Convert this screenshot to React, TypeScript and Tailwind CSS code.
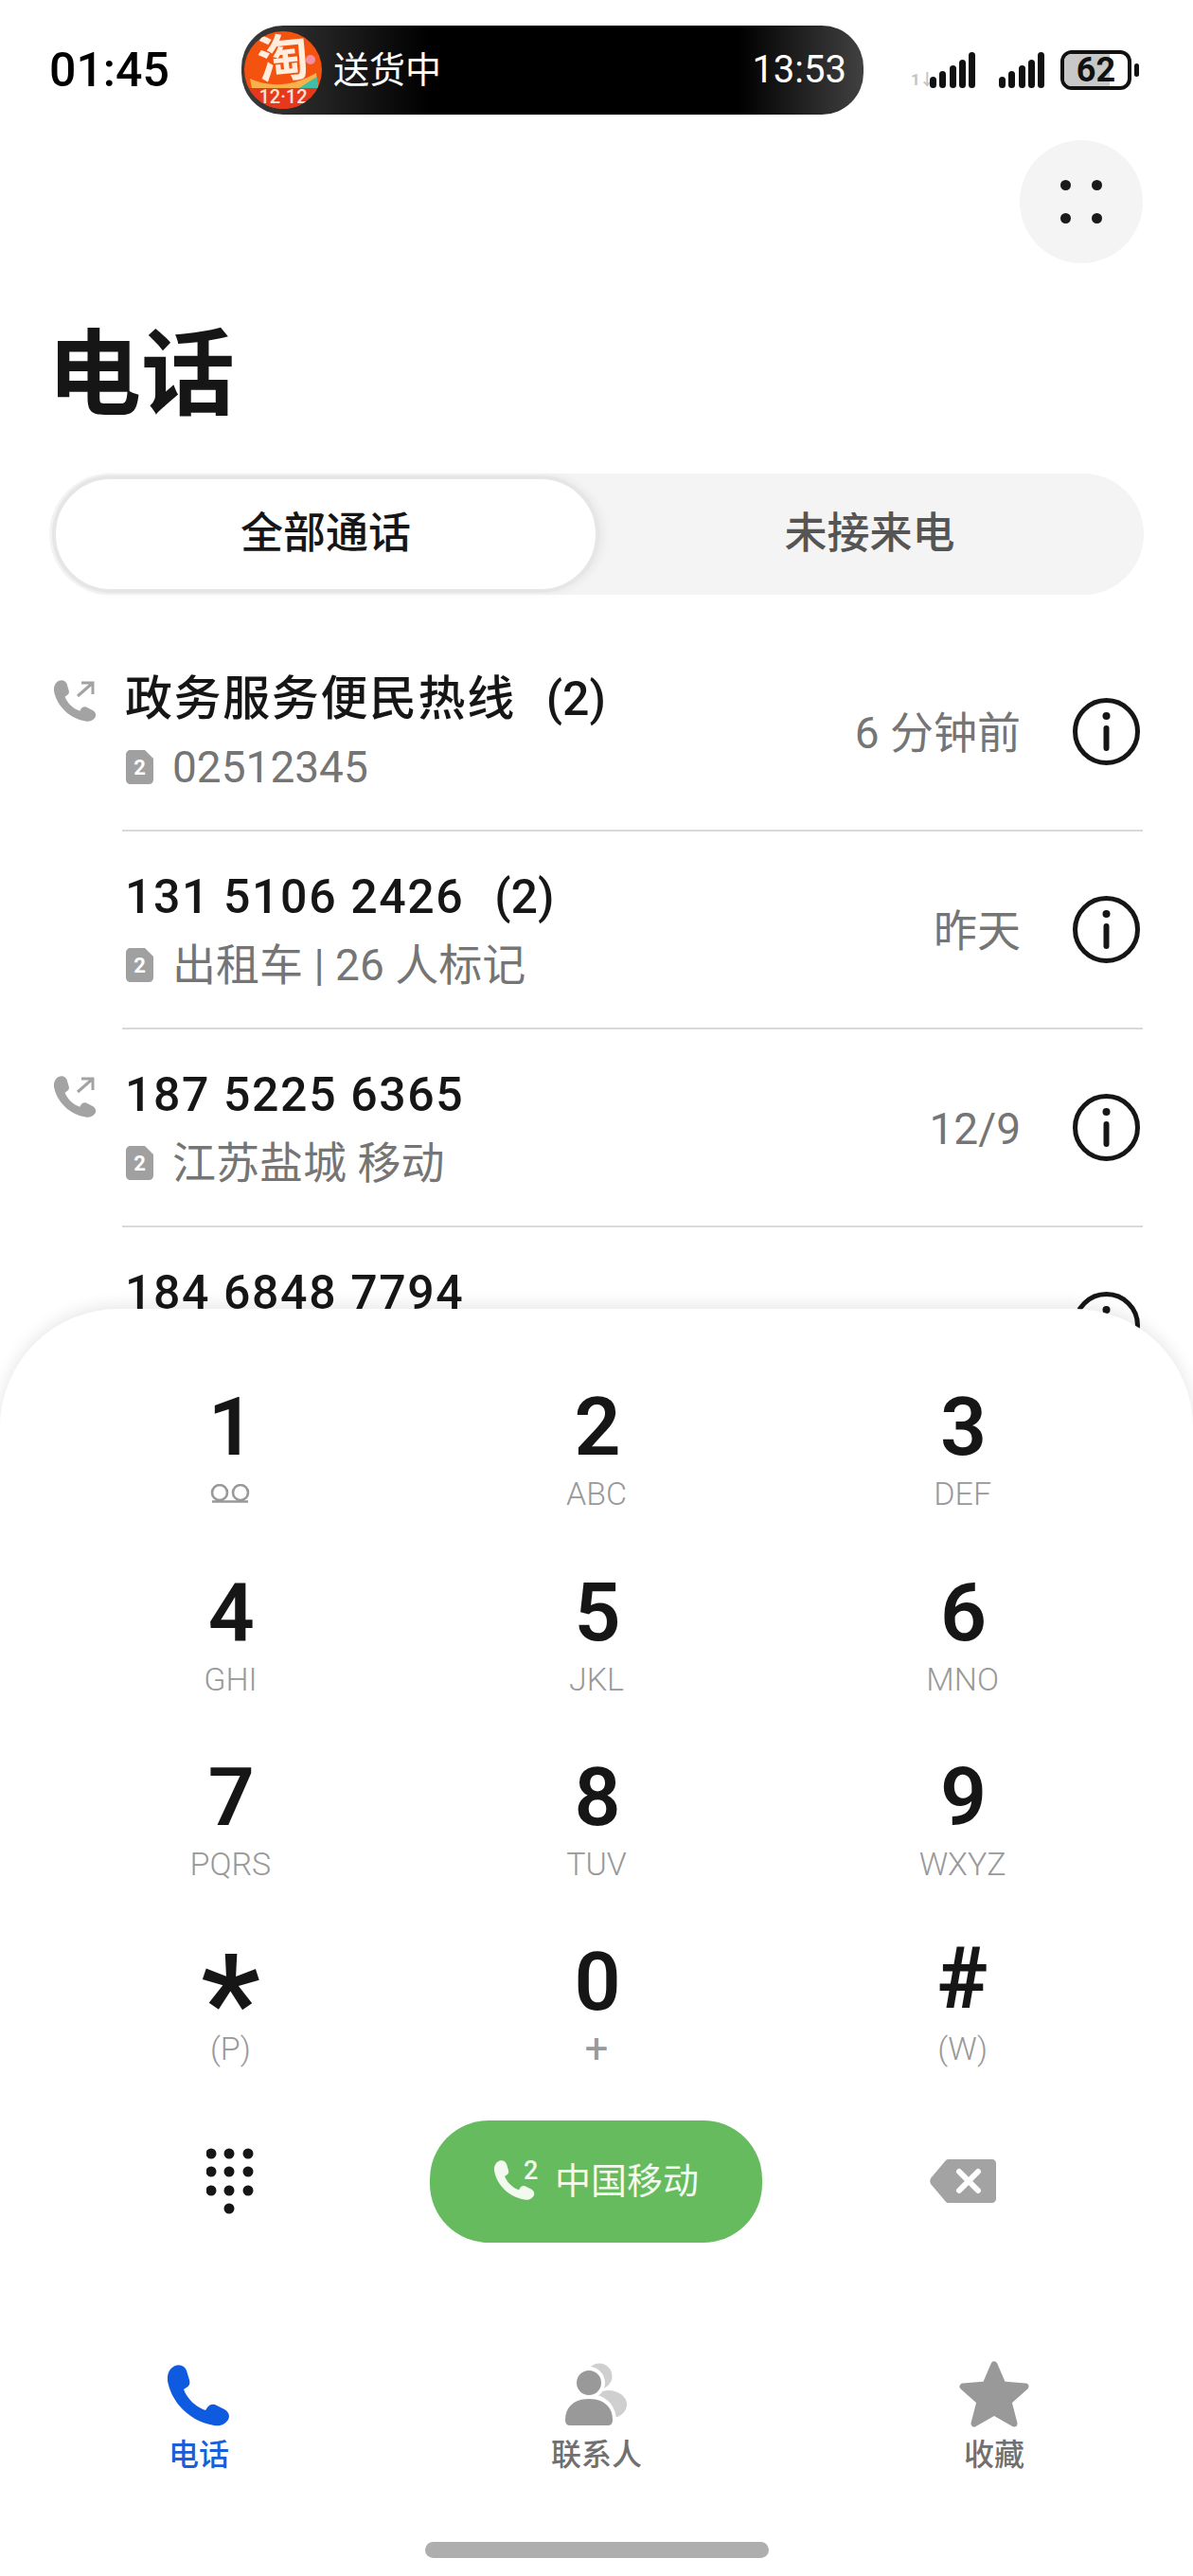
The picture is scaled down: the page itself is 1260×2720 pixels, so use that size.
import React from 'react';

const HANDSET = 'M8 1C13-1 18 1 20 6L23 16C24 20 23 22 20 24L17 26C21 36 29 44 40 48L42 45C44 42 47 41 50 42L60 47C65 50 66 54 64 58C60 64 54 65 49 64C24 60 4 40 0 17C-1 9 3 3 8 1Z';

const calls = [
  { name: '政务服务便民热线', count: '(2)', sub: '02512345', time: '6 分钟前', outgoing: true },
  { name: '131 5106 2426', count: '(2)', sub: '出租车 | 26 人标记', time: '昨天', outgoing: false },
  { name: '187 5225 6365', count: '', sub: '江苏盐城 移动', time: '12/9', outgoing: true },
  { name: '184 6848 7794', count: '', sub: '', time: '', outgoing: false },
];

const keys = [
  { d: '1', l: '' },
  { d: '2', l: 'ABC' },
  { d: '3', l: 'DEF' },
  { d: '4', l: 'GHI' },
  { d: '5', l: 'JKL' },
  { d: '6', l: 'MNO' },
  { d: '7', l: 'PQRS' },
  { d: '8', l: 'TUV' },
  { d: '9', l: 'WXYZ' },
  { d: '*', l: '(P)' },
  { d: '0', l: '+' },
  { d: '#', l: '(W)' },
];

const SignalBars = () => (
  <svg width="48" height="38" viewBox="0 0 48 38" fill="#111">
    <rect x="0" y="26" width="7" height="12" rx="3.5" />
    <rect x="10" y="20" width="7" height="18" rx="3.5" />
    <rect x="21" y="14" width="7" height="24" rx="3.5" />
    <rect x="31" y="8" width="7" height="30" rx="3.5" />
    <rect x="41" y="0" width="7" height="38" rx="3.5" />
  </svg>
);

const InfoIcon = () => (
  <svg width="71" height="71" viewBox="0 0 71 71" fill="none">
    <circle cx="35.5" cy="35.5" r="33" stroke="#161616" strokeWidth="5" />
    <circle cx="35.5" cy="19" r="4" fill="#161616" />
    <rect x="32.5" y="29" width="6" height="27" rx="3" fill="#161616" />
  </svg>
);

const OutgoingIcon = () => (
  <svg width="44" height="45" viewBox="0 0 44 45" fill="none">
    <g transform="scale(0.68)">
      <path d={HANDSET} fill="#a3a3a3" />
    </g>
    <path d="M25 17L41 3M29 3H41V15" stroke="#a3a3a3" strokeWidth="3" />
  </svg>
);

const SimBadge = () => (
  <svg width="29" height="36" viewBox="0 0 29 36" className="shrink-0 ml-[1px]">
    <path d="M5 0H20L29 9V31C29 34 27 36 24 36H5C2 36 0 34 0 31V5C0 2 2 0 5 0Z" fill="#a0a0a0" />
    <text x="14.5" y="26" textAnchor="middle" fontSize="22" fontWeight="700" fontFamily="Roboto, sans-serif" fill="#fff">2</text>
  </svg>
);

const VoicemailIcon = () => (
  <svg width="44" height="20" viewBox="0 0 44 20" fill="none" stroke="#999" strokeWidth="2.6">
    <circle cx="11" cy="9" r="8" />
    <circle cx="33" cy="9" r="8" />
    <path d="M3 18.5H41" />
  </svg>
);

const DialpadIcon = () => (
  <svg width="50" height="70" viewBox="0 0 50 70" fill="#161616">
    {[6, 25, 45].map(y => [5, 24, 44].map(x => <circle key={`${x}-${y}`} cx={x} cy={y} r="5.5" />))}
    <circle cx="24" cy="64" r="5.5" />
  </svg>
);

const BackspaceIcon = () => (
  <svg width="70" height="46" viewBox="0 0 70 46">
    <path d="M17 1C18 0 19 0 20 0H66C68 0 70 2 70 4V42C70 44 68 46 66 46H20C19 46 18 46 17 45L1 26C0 24 0 22 1 20Z" fill="#a3a3a3" />
    <path d="M31 13L51 33M51 13L31 33" stroke="#fff" strokeWidth="6" strokeLinecap="round" />
  </svg>
);

const ContactsIcon = () => (
  <svg width="66" height="68" viewBox="0 0 66 68">
    <circle cx="36" cy="14" r="13.5" fill="#cfcfcf" />
    <ellipse cx="46" cy="44" rx="19" ry="15" fill="#cfcfcf" />
    <circle cx="25" cy="21" r="17" fill="#fff" />
    <path d="M-4 62C-4 44 8 33 25 33C42 33 54 44 54 62V68H-4Z" fill="#fff" />
    <circle cx="25" cy="21" r="13" fill="#999" />
    <path d="M0 60C0 46 10 38 25 38C40 38 50 46 50 60Q50 66 45 66H5Q0 66 0 60Z" fill="#999" />
  </svg>
);

const StarIcon = () => (
  <svg width="74" height="70" viewBox="0 0 74 70">
    <path d="M37 4L46 25L70 27L52 43L58 66L37 54L16 66L22 43L4 27L28 25Z" fill="#999" stroke="#999" strokeWidth="7" strokeLinejoin="round" />
  </svg>
);

const App: React.FC = () => {
  return (
    <div className="w-[1260px] h-[2720px] bg-white flex flex-col overflow-hidden font-['Roboto','Noto_Sans_CJK_SC',sans-serif] text-[#161616]">
      {/* content behind the dial sheet */}
      <div className="h-[1512px] overflow-hidden shrink-0 flex flex-col">
        <div className="flex items-center pt-[27px] pl-[52px] h-[121px] shrink-0">
          <span className="w-[203px] text-[50px] leading-[94px] font-medium text-black">01:45</span>
          <div className="w-[657px] h-[94px] rounded-[44px] bg-[linear-gradient(90deg,#3c3c3c_0%,#000_30%,#000_80%,#414141_100%)] flex items-center pl-[3px] pr-[18px] text-white">
            <div className="relative w-[82px] h-[82px] rounded-full bg-[#f4520f] overflow-hidden flex justify-center shrink-0">
              <svg width="82" height="82" viewBox="0 0 82 82" className="absolute left-0 top-0">
                <path d="M6 50C28 60 52 58 76 44L78 60H8Z" fill="#f9b24b" />
                <path d="M58 60C64 56 70 52 77 48L78 60Z" fill="#3fbfa5" />
                <circle cx="70" cy="30" r="5" fill="#f58fa0" />
                <rect x="0" y="60" width="82" height="24" fill="#e5381c" />
              </svg>
              <span className="relative mt-[2px] h-[56px] text-[54px] leading-[56px] font-bold text-[#ffeede] -rotate-6">淘</span>
              <span className="absolute left-0 right-0 bottom-[2px] text-center text-[20px] leading-[22px] font-medium text-[#ffe3d2]">12·12</span>
            </div>
            <span className="ml-[12px] text-[38px] leading-[46px]">送货中</span>
            <span className="ml-auto text-[40px] leading-[46px]">13:53</span>
          </div>
          <div className="ml-[50px] flex items-end h-[38px]">
            <span className="w-[20px] text-[17px] leading-[18px] font-bold tracking-[-1px] text-[#c4c4c4]">1↓</span>
            <SignalBars />
            <span className="w-[25px]" />
            <SignalBars />
          </div>
          <div className="ml-[17px] flex items-center">
            <div className="relative w-[75px] h-[42px] rounded-[12px] border-[4px] border-[#111] overflow-hidden flex items-center justify-center">
              <div className="absolute left-0 top-0 bottom-0 w-[48px] bg-[#c8c8c8]" />
              <span className="relative text-[36px] leading-[34px] font-bold text-[#111]">62</span>
            </div>
            <div className="ml-[3px] w-[5px] h-[14px] rounded-full bg-[#111]" />
          </div>
        </div>

        <div className="mt-[27px] mr-[53px] self-end w-[130px] h-[130px] rounded-full bg-[#f4f4f4] grid grid-cols-2 place-content-center justify-items-center gap-x-[17px] gap-y-[24px] px-[40px]">
          <span className="w-[11px] h-[11px] rounded-full bg-[#1a1a1a]" />
          <span className="w-[11px] h-[11px] rounded-full bg-[#1a1a1a]" />
          <span className="w-[11px] h-[11px] rounded-full bg-[#1a1a1a]" />
          <span className="w-[11px] h-[11px] rounded-full bg-[#1a1a1a]" />
        </div>

        <h1 className="mt-[63px] ml-[50px] text-[99px] leading-[110px] font-bold">电话</h1>

        <div className="mt-[49px] mx-[52px] h-[128px] shrink-0 rounded-full bg-[#f4f4f4] flex items-center">
          <div className="ml-[3px] w-[578px] h-[124px] rounded-full bg-white border-[4px] border-[#e6e6e6] shadow-[4px_0_10px_rgba(0,0,0,0.05)] flex items-center justify-center text-[45px] font-medium">全部通话</div>
          <div className="flex-1 text-center text-[45px] font-medium text-[#555] pr-[4px]">未接来电</div>
        </div>

        <div className="mt-[41px] ml-[52px] mr-[53px]">
          {calls.map(call => (
            <div key={call.name} className="flex h-[209px]">
              <div className="w-[77px] shrink-0 pt-[49px] pl-[5px]">{call.outgoing && <OutgoingIcon />}</div>
              <div className="flex-1 flex items-center border-b-2 border-[#d9d9d9]">
                <div className="flex-1 pl-[3px]">
                  <div className="text-[50px] leading-[68px] font-medium tracking-[1.6px]">
                    {call.name}
                    {call.count && <span className="ml-[32px] tracking-normal">{call.count}</span>}
                  </div>
                  <div className="mt-[6px] h-[64px] flex items-center gap-[20px] text-[46px] leading-[64px] text-[#757575]">
                    {call.sub && <SimBadge />}
                    <span>{call.sub}</span>
                  </div>
                </div>
                <span className="pt-[4px] text-[46px] text-[#757575] mr-[55px]">{call.time}</span>
                <div className="mr-[3px]"><InfoIcon /></div>
              </div>
            </div>
          ))}
        </div>
      </div>

      {/* dial sheet */}
      <div className="relative -mt-[130px] flex-1 bg-white rounded-t-[125px] shadow-[0_-3px_18px_rgba(0,0,0,0.1)] flex flex-col">
        <div className="mt-[50px] px-[50px] grid grid-cols-3 auto-rows-[195.4px]">
          {keys.map(key => (
            <div key={key.d} className="flex flex-col items-center justify-center">
              {key.d === '*' ? (
                <span className="h-[90px] text-[140px] leading-[132px] font-semibold">*</span>
              ) : key.d === '#' ? (
                <span className="h-[90px] text-[90px] leading-[84px] font-bold">#</span>
              ) : (
                <span className="h-[90px] pl-[2px] text-[86px] leading-[90px] font-semibold">{key.d}</span>
              )}
              <div className="mt-[5px] h-[40px] flex items-center leading-[40px] font-light text-[#999]">
                {key.d === '1' ? (
                  <VoicemailIcon />
                ) : key.d === '0' ? (
                  <span className="text-[44px] font-normal">+</span>
                ) : (
                  <span className="text-[34px]">{key.l}</span>
                )}
              </div>
            </div>
          ))}
        </div>

        <div className="mt-[25px] px-[50px] grid grid-cols-3 items-center">
          <div className="flex justify-center"><DialpadIcon /></div>
          <div className="flex justify-center">
            <div className="w-[351px] h-[129px] rounded-[62px] bg-[#66bb5f] flex items-center justify-center gap-[14px] text-[#f2faf0] text-[38px]">
              <svg width="50" height="44" viewBox="0 0 50 44">
                <g transform="scale(0.65)"><path d={HANDSET} fill="#f2faf0" /></g>
                <text x="31" y="20" fontSize="27" fontWeight="500" fontFamily="Roboto, sans-serif" fill="#f2faf0">2</text>
              </svg>
              <span>中国移动</span>
            </div>
          </div>
          <div className="flex justify-center"><BackspaceIcon /></div>
        </div>

        <div className="mt-[125px] grid grid-cols-3">
          <div className="flex flex-col items-center text-[#1a5fd8]">
            <div className="h-[70px] flex items-end">
              <svg width="66" height="66" viewBox="0 0 66 66"><path d={HANDSET} fill="#0f5be0" /></svg>
            </div>
            <span className="mt-[9px] text-[32px] leading-[40px] font-medium">电话</span>
          </div>
          <div className="flex flex-col items-center text-[#707070]">
            <div className="h-[70px] flex items-end"><ContactsIcon /></div>
            <span className="mt-[9px] text-[32px] leading-[40px] font-medium">联系人</span>
          </div>
          <div className="flex flex-col items-center text-[#707070]">
            <div className="h-[70px] flex items-end"><StarIcon /></div>
            <span className="mt-[9px] text-[32px] leading-[40px] font-medium">收藏</span>
          </div>
        </div>

        <div className="mt-[72px] mx-auto w-[363px] h-[17px] rounded-full bg-[#aeaeae]" />
      </div>
    </div>
  );
};

export default App;
